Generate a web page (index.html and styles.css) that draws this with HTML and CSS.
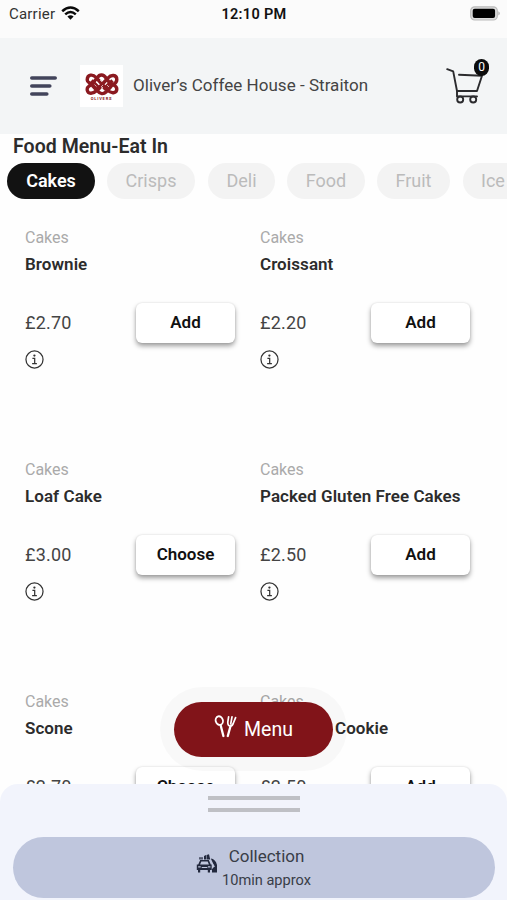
FILE: index.html
```html
<!DOCTYPE html>
<html lang="en">
<head>
<meta charset="utf-8">
<title>Oliver’s Coffee House - Straiton</title>
<link rel="stylesheet" href="styles.css">
</head>
<body>
<svg class="defs" width="0" height="0">
  <symbol id="info" viewBox="0 0 20 20"><circle cx="10" cy="10" r="9" fill="none" stroke="#333" stroke-width="1.3"/><circle cx="9.9" cy="5.9" r="1.2" fill="#333"/><path d="M7.8 8.7h2.4v5.6M7.5 14.4h5" fill="none" stroke="#333" stroke-width="1.3"/></symbol>
</svg>
<div class="app">
  <div class="status">
    <div class="carrier"><span>Carrier</span>
      <svg width="19" height="14" viewBox="0 0 19 14"><g fill="none" stroke="#0a0a0a" stroke-width="2.5"><path d="M1.2 5.2Q9.5-2.2 17.8 5.2"/><path d="M4.2 8.4Q9.5 3.6 14.8 8.4"/></g><path d="M6.4 10.6Q9.5 8 12.6 10.6L9.5 13.8Z" fill="#0a0a0a"/></svg>
    </div>
    <div class="time">12:10 PM</div>
    <svg class="battery" width="31" height="15" viewBox="0 0 31 15"><rect x=".7" y=".8" width="26.6" height="13.2" rx="4" fill="#ddd" stroke="#bbb" stroke-width="1.2"/><rect x="2.7" y="2.8" width="22.4" height="9.2" rx="2" fill="#000"/><path d="M28.5 5.2Q30.8 7.4 28.5 9.6Z" fill="#999"/></svg>
  </div>
  <header class="header">
    <svg class="burger" width="28" height="20" viewBox="0 0 28 20"><g stroke="#42445b" stroke-width="3.6" stroke-linecap="round"><path d="M2.8 2h23.4M2.8 10h18M2.8 18h15"/></g></svg>
    <div class="logo">
      <svg width="34" height="23" viewBox="0 0 34 23"><g fill="none" stroke="#8b1a20" stroke-width="3.4" stroke-linejoin="round"><path d="M2.2 7C2.2 1 8 1 11 4.5L22.5 17C26 21 31.8 20.5 31.8 16S27 12.5 24 9L21 5C18.5 1 14.5 1 12.5 4.5L7 11C3 14 2 14 2.2 17C3 21.5 8 21 11 18L23 5C26 1.5 31.8 1.5 31.8 6.5S28 10.5 25.5 14L21 19C18.5 21.5 15 21 12.5 18L6 11C3 9 2.2 9 2.2 7Z"/><path d="M6.5 7.5l9 9M27.5 7.5l-9 9"/></g><g stroke="#f8e8e8" stroke-width=".7"><path d="M9.5 11.5l2 2M15 7l2 2M22 12l2 2M16 14l2-2"/></g></svg>
      <span>OLIVERS</span>
    </div>
    <h1 class="shop">Oliver’s Coffee House - Straiton</h1>
    <div class="cart">
      <svg width="38" height="37" viewBox="0 0 38 37"><g fill="none" stroke="#2b2b2e" stroke-width="1.9" stroke-linecap="round" stroke-linejoin="round"><path d="M1.2 1.2L7.2 3.4L11 23H31L36 7.8L13 6.8"/><path d="M11 23V28.4H31"/><circle cx="14.2" cy="31.5" r="3"/><circle cx="27.2" cy="31.5" r="3"/></g></svg>
      <span class="badge">0</span>
    </div>
  </header>
  <h2 class="title">Food Menu-Eat In</h2>
  <nav class="chips">
    <span class="chip active">Cakes</span><span class="chip">Crisps</span><span class="chip deli">Deli</span><span class="chip food">Food</span><span class="chip fruit">Fruit</span><span class="chip ice">Ice</span>
  </nav>
  <main class="grid">
    <article class="item"><p class="cat">Cakes</p><h3>Brownie</h3><div class="buy"><span class="price">£2.70</span><button>Add</button></div><svg class="info"><use href="#info"/></svg></article>
    <article class="item"><p class="cat">Cakes</p><h3>Croissant</h3><div class="buy"><span class="price">£2.20</span><button>Add</button></div><svg class="info"><use href="#info"/></svg></article>
    <article class="item"><p class="cat">Cakes</p><h3>Loaf Cake</h3><div class="buy"><span class="price">£3.00</span><button>Choose</button></div><svg class="info"><use href="#info"/></svg></article>
    <article class="item"><p class="cat">Cakes</p><h3>Packed Gluten Free Cakes</h3><div class="buy"><span class="price">£2.50</span><button>Add</button></div><svg class="info"><use href="#info"/></svg></article>
    <article class="item"><p class="cat">Cakes</p><h3>Scone</h3><div class="buy"><span class="price">£2.70</span><button>Choose</button></div></article>
    <article class="item"><p class="cat">Cakes</p><h3 class="cookie">Cookie</h3><div class="buy"><span class="price">£2.50</span><button>Add</button></div></article>
  </main>
  <div class="halo"><div class="menu">
    <svg width="23" height="23" viewBox="0 0 23 23"><g fill="none" stroke="#fff" stroke-linecap="round"><ellipse cx="5.3" cy="5.6" rx="3.6" ry="4.4" stroke-width="1.8" transform="rotate(-15 5.3 5.6)"/><path d="M6.7 10.5L9.4 21" stroke-width="2.3"/><path d="M16.4 11.5L13.8 21" stroke-width="2.3"/><path d="M14.6 1.8L13.8 7Q13.6 11 16.4 11Q18.6 11 19.4 8L21.6 2.6M18 1.8L16.7 9" stroke-width="1.7"/></g></svg>
    <span>Menu</span></div></div>
  <section class="sheet">
    <div class="handle"></div>
    <div class="collection">
      <svg width="22" height="20" viewBox="0 0 22 20"><g fill="#22283d"><path d="M3 3.2h4v2.3H3z" opacity=".7"/><path d="M8 2l2-1v4.5H8zM10.5 1L13 .2l1.2 5.3h-3.7z"/><path d="M4.2 6h8.6l2 4.5h.9V16H14v2.5h-2.2V16H4.2v2.5H2V16H.8v-5.500h1.400z"/><path d="M14.800 4.500Q19.500 5 21 11v7.500h-5v-3.500l2.500-2.500z"/></g><path d="M5.300 7.500h6.400l1.200 3H4.100zM2.200 12.300h2.500v1.300H2.200zM11.900 12.300h2.500v1.300h-2.500zM5.700 13h5.600v1H5.700z" fill="#bfc6dd"/><path d="M14.500 7.500L18.500 12.500" stroke="#bfc6dd"/></svg>
      <div class="ctext"><span class="c1">Collection</span><span class="c2">10min approx</span></div>
    </div>
  </section>
</div>
</body>
</html>
```
FILE: styles.css
```css
* { box-sizing: border-box; margin: 0; padding: 0; }
body { font-family: Roboto, "Liberation Sans", sans-serif; background: #fff; color: #2d2d2d; }
.defs { position: absolute; }
.app { position: relative; width: 507px; height: 900px; overflow: hidden; background: #fefefe; }
.status { height: 38px; background: #fbfbfb; display: grid; grid-template-columns: 1fr auto 1fr; align-items: start; padding: 5px 6px 0 9px; color: #111; }
.carrier { display: flex; gap: 6px; font-size: 15px; line-height: 18px; letter-spacing: .2px; color: #333; }
.carrier svg { margin-top: 1px; }
.time { font-size: 14.5px; line-height: 19px; font-weight: 600; letter-spacing: .3px; margin-left: -2px; }
.battery { justify-self: end; margin-top: 1px; }
.header { height: 96px; background: #f3f5f6; display: flex; align-items: center; padding: 0 17px 0 29px; }
.burger { margin-right: 23px; }
.logo { width: 43px; height: 42px; background: #fff; display: flex; flex-direction: column; align-items: center; padding-top: 8px; margin-right: 10px; }
.logo span { font-size: 4px; line-height: 4px; font-weight: 700; letter-spacing: .8px; color: #8b1a20; margin-top: 1px; }
.shop { flex: 1; font-size: 17px; font-weight: 400; color: #444; white-space: nowrap; padding-bottom: 2px; letter-spacing: .03px; }
.cart { position: relative; width: 44px; height: 37px; margin-top: 1px; }
.badge { position: absolute; left: 28px; top: -9px; width: 15px; height: 17px; border-radius: 8px; background: #0c0c0c; color: #fff; font-size: 12px; line-height: 17px; text-align: center; }
.title { font-size: 19.5px; line-height: 25px; font-weight: 600; padding-left: 13px; height: 29px; color: #2c2c2c; letter-spacing: .05px; }
.chips { display: flex; gap: 12px; padding-left: 7px; }
.chip { flex: none; width: 88px; height: 36px; border-radius: 18px; background: #f3f3f3; color: #bbb; font-size: 18px; line-height: 35px; text-align: center; }
.chip.active { background: #121212; color: #fff; font-weight: 600; }
.deli { width: 67px; margin-left: 1px; }
.food { width: 78px; }
.fruit { width: 73px; }
.ice { width: 115px; text-align: left; padding-left: 18px; margin-left: 1px; }
.grid { display: grid; grid-template-columns: 235px 235px; grid-auto-rows: 232px; padding: 28px 0 0 25px; }
.item { padding-right: 25px; }
.cat { font-size: 16px; line-height: 22px; color: #aaa; }
h3 { font-size: 17px; line-height: 30px; font-weight: 600; letter-spacing: .06px; white-space: nowrap; color: #2c2c2c; }
.cookie { padding-left: 75px; }
.buy { display: flex; justify-content: space-between; align-items: center; margin-top: 24px; height: 40px; }
.price { font-size: 18px; color: #444; letter-spacing: .2px; padding-bottom: 2px; }
button { width: 99px; height: 40px; border: 0; border-radius: 6px; background: #fff; color: #111; font: 600 17px Roboto, sans-serif; padding-bottom: 2px; box-shadow: 0 3px 5px rgba(0,0,0,.38), 0 0 2px rgba(0,0,0,.12); }
.info { display: block; width: 19px; height: 19px; margin-top: 7px; }
.halo { position: absolute; left: 160px; top: 687px; width: 187px; height: 84px; border-radius: 42px; background: rgba(0,0,0,.025); padding: 15px 14px 14px; }
.menu { width: 159px; height: 55px; border-radius: 27.5px; background: #811419; color: #fff; display: flex; justify-content: center; gap: 7px; font-size: 19.5px; line-height: 55px; }
.menu svg { margin-top: 13px; }
.sheet { position: absolute; left: 0; bottom: 0; width: 507px; height: 116px; border-radius: 18px 18px 0 0; background: #f2f4fc; padding: 12px 12px 0 13px; }
.handle { width: 92px; height: 16px; margin-left: 195px; border: solid #bfc0c5; border-width: 4px 0; }
.collection { height: 61px; margin-top: 25px; border-radius: 31px; background: #bfc6dd; display: flex; padding-left: 183px; }
.collection svg { margin-top: 17px; }
.ctext { display: flex; flex-direction: column; align-items: center; margin-left: 4px; color: #393d47; }
.c1 { font-size: 17px; line-height: 24px; margin-top: 7px; }
.c2 { font-size: 14.6px; line-height: 24px; }
```
